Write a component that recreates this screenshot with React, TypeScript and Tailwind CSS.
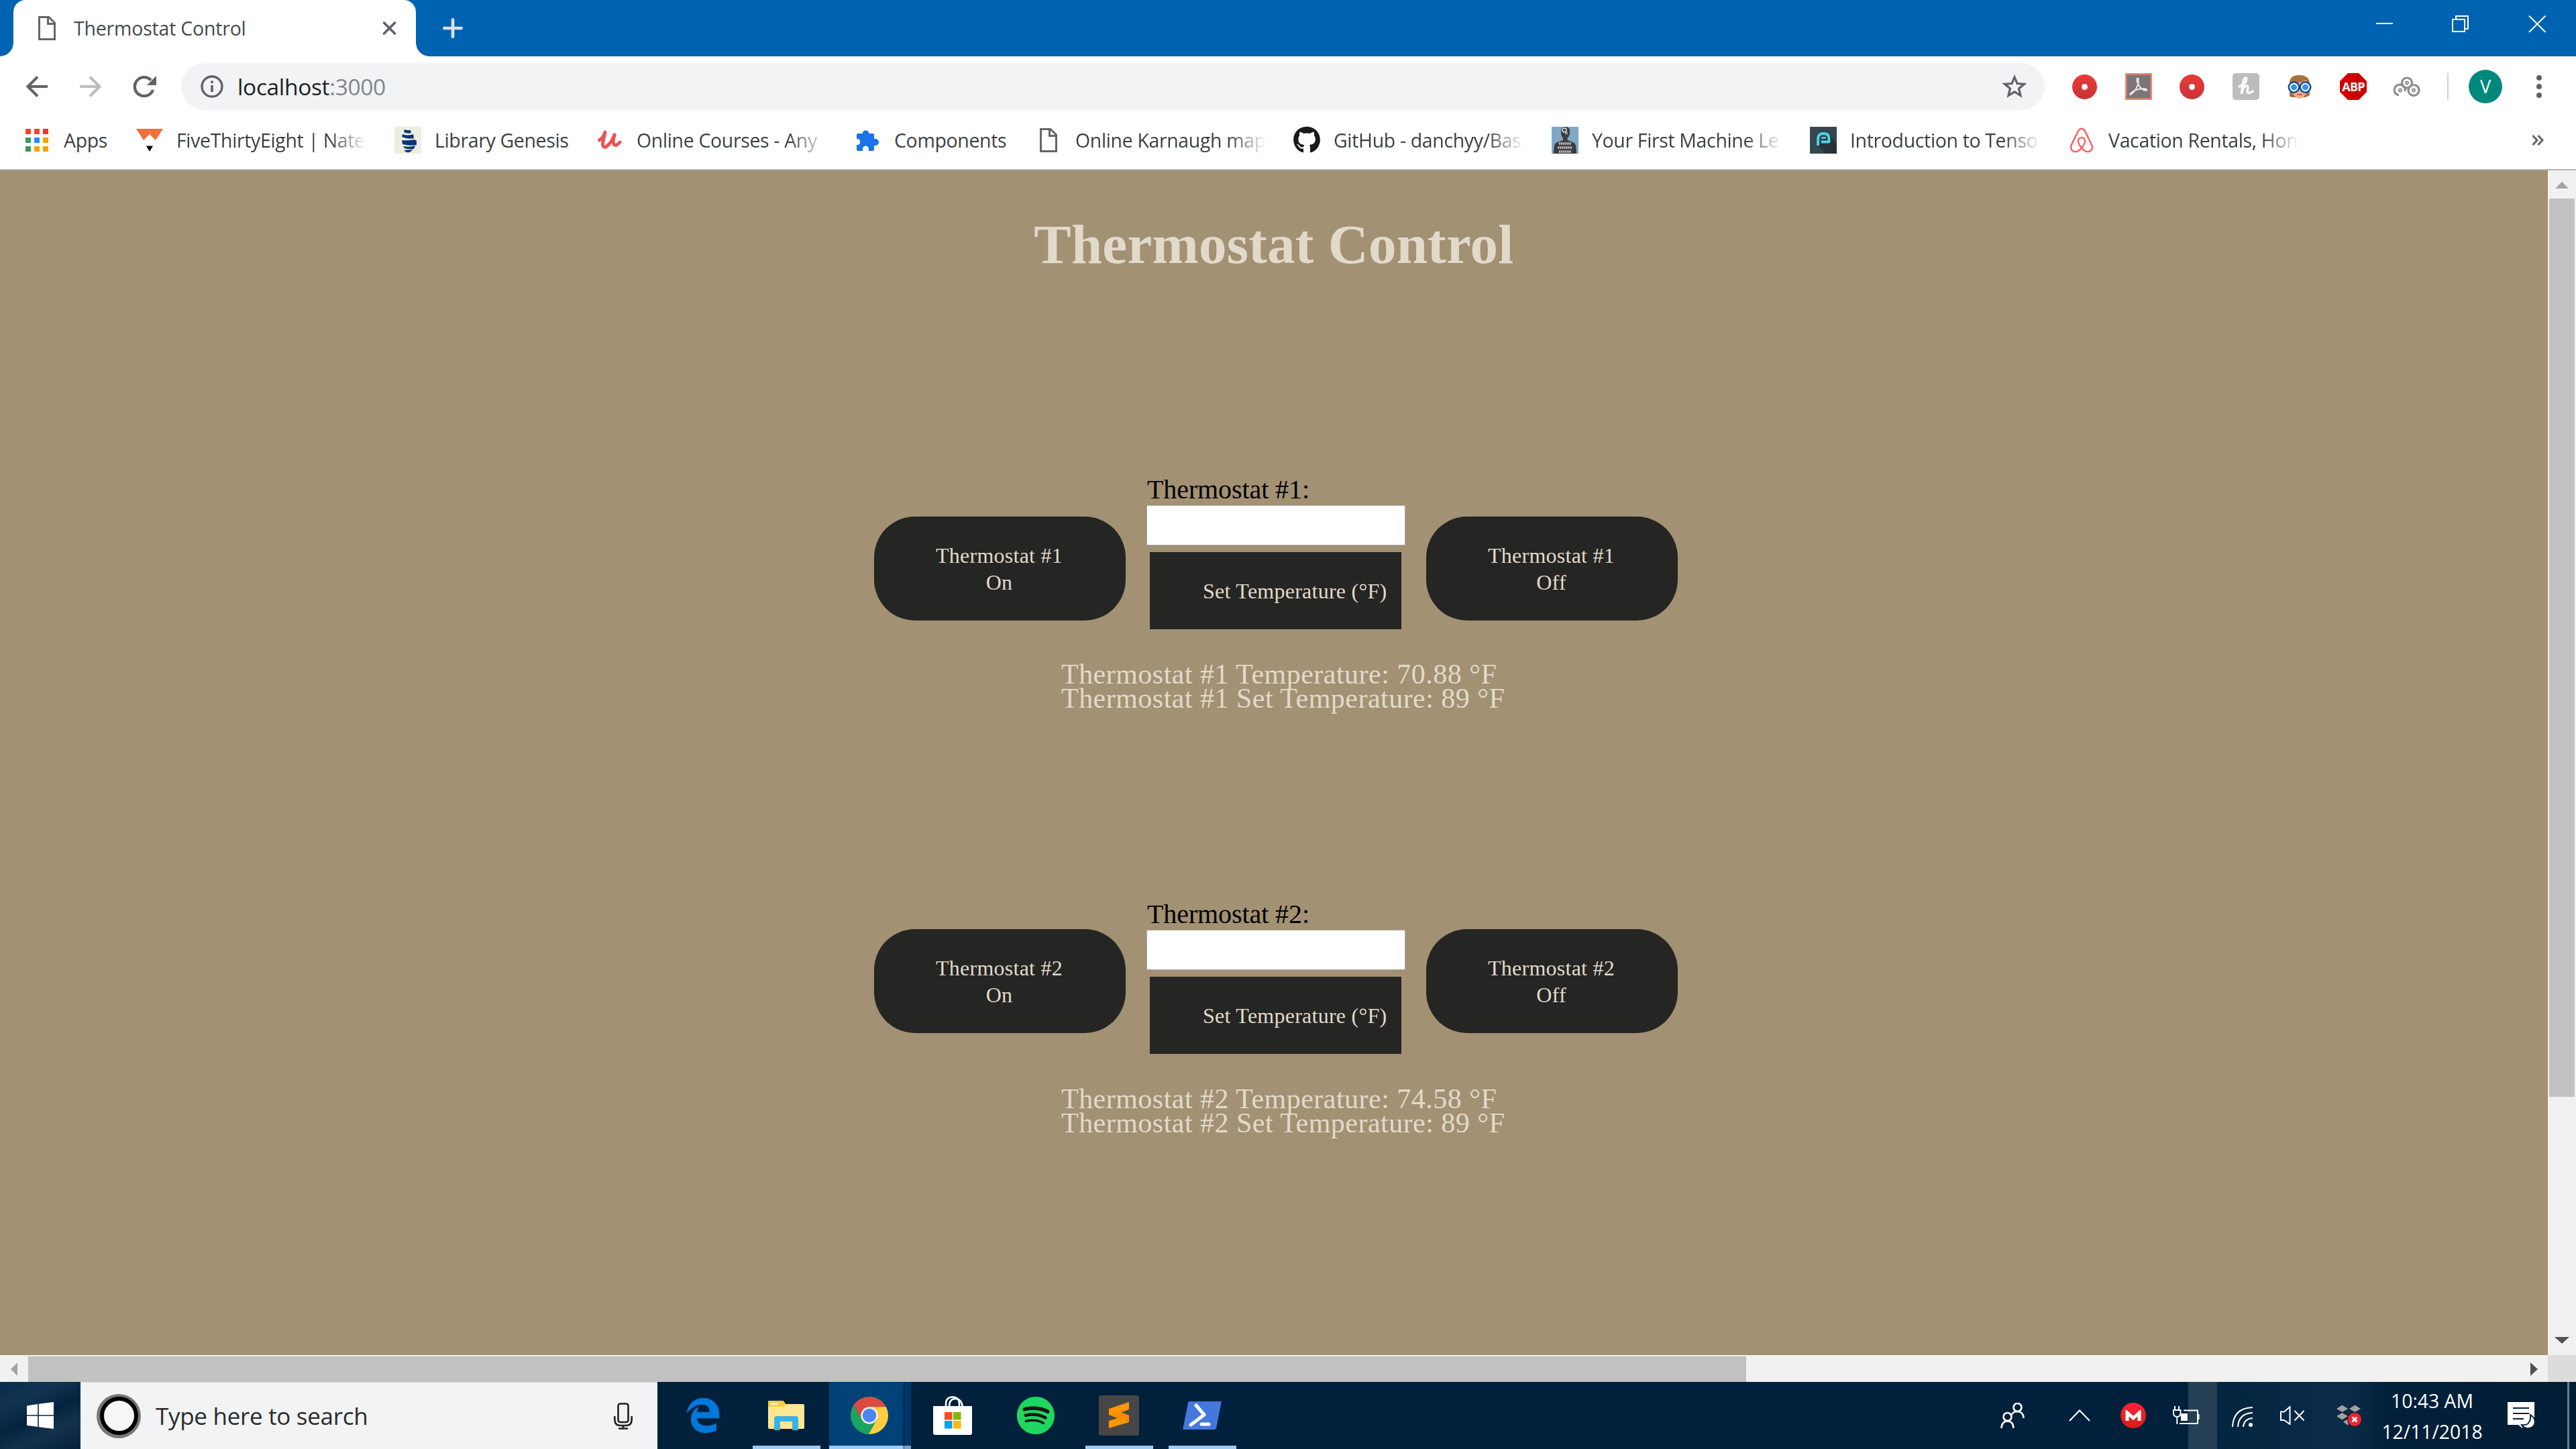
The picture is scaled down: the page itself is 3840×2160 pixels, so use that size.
import type { ReactNode } from 'react';
import { FaAirbnb, FaEdgeLegacy, FaGithub, FaSpotify } from 'react-icons/fa';

/* ---------- Browser icons ---------- */

function PageIcon() {
  return (
    <svg width="26" height="36" viewBox="0 0 26 36" fill="none" stroke="#666" strokeWidth="3" className="shrink-0">
      <path d="M1.5 1.5H16L24.5 10V34.5H1.5Z" />
      <path d="M14.5 2V11.5H24" />
    </svg>
  );
}

function TabCloseIcon() {
  return (
    <svg width="21" height="20" viewBox="0 0 21 20" stroke="#5f6368" strokeWidth="3.6" strokeLinecap="round">
      <path d="M2.500 2L18.500 18M18.500 2L2.500 18" />
    </svg>
  );
}

function PlusIcon() {
  return (
    <svg width="30" height="30" viewBox="0 0 30 30" stroke="#dbe3ea" strokeWidth="4.600" strokeLinecap="round">
      <path d="M15 2.300V27.700M2.300 15H27.700" />
    </svg>
  );
}

function ArrowIcon({ color, flip = false }: { color: string; flip?: boolean }) {
  return (
    <svg width="34" height="32" viewBox="0 0 34 32" fill="none" stroke={color} strokeWidth="4" className={flip ? 'rotate-180' : ''}>
      <path d="M33 16H4M18 1.500L3.500 16L18 30.500" />
    </svg>
  );
}

function ReloadIcon() {
  return (
    <svg width="36" height="34" viewBox="0 0 36 34">
      <path d="M30 22A14 14 0 1 1 27 7.500" fill="none" stroke="#5f6368" strokeWidth="4.200" />
      <path d="M35 1V15H21Z" fill="#5f6368" />
    </svg>
  );
}

function InfoIcon() {
  return (
    <svg width="36" height="36" viewBox="0 0 36 36">
      <circle cx="18" cy="18" r="15" fill="none" stroke="#5f6368" strokeWidth="3.400" />
      <path d="M18 16V26M18 9.500V13" stroke="#5f6368" strokeWidth="3.600" />
    </svg>
  );
}

function StarIcon() {
  return (
    <svg width="36" height="36" viewBox="0 0 36 36" fill="none" stroke="#5f6368" strokeWidth="3.200">
      <path d="M18 4L22 13.500L32.500 14.300L24.500 21L27 31.500L18 26L9 31.500L11.500 21L3.500 14.300L14 13.500Z" />
    </svg>
  );
}

/* ---------- Bookmark icons ---------- */

function AppsIcon() {
  const colors = ['#ff3b30', '#ff3b30', '#f5342b', '#2fa05a', '#1e8cff', '#f4a300', '#2fa05a', '#f4a300', '#f4a300'];
  return (
    <div className="grid grid-cols-3 gap-[5px]">
      {colors.map((color, i) => (
        <span key={i} className="size-[8px]" style={{ backgroundColor: color }} />
      ))}
    </div>
  );
}

function FiveThirtyEightIcon() {
  return (
    <svg width="40" height="36" viewBox="0 0 40 36">
      <path d="M0 1H40L29 18L20 9L11 18Z" fill="#ed713a" />
      <path d="M15 26.500H25L20 35Z" fill="#000" />
    </svg>
  );
}

function LibraryGenesisIcon() {
  return (
    <svg width="40" height="40" viewBox="0 0 40 40">
      <rect width="40" height="40" fill="#edeee0" />
      <path
        d="M15 4Q20 6 24 5L25 9Q20 11 14 8ZM12 11Q20 14 28 11L29 17Q20 19 11 15ZM11 20Q20 21 30 19L33 21V27Q22 29 12 26ZM13 29Q22 31 31 28L29 33Q20 34 15 32ZM14 35L27 34Q24 39 18 38Z"
        fill="#07357c"
      />
    </svg>
  );
}

function UdemyIcon() {
  return (
    <svg width="36" height="30" viewBox="0 0 36 30" fill="none" stroke="#ec5252" strokeLinecap="round" strokeLinejoin="round">
      <path d="M2.500 15Q8 12 11 3Q8 16 7.500 21Q8 27 13 24.500Q21 18 25 7" strokeWidth="5" />
      <path d="M25 7Q22 17 24 21Q27 25 33 18" strokeWidth="4.800" />
    </svg>
  );
}

function PuzzleIcon() {
  return (
    <svg width="34" height="34" viewBox="0 0 34 34" fill="#1a73e8">
      <path d="M10 7V5A5 5 0 0 1 19 5V7H25Q27 7 27 9V15H29A4.700 4.700 0 0 1 29 25H27V31Q27 33 25 33H19V30A4.500 4.500 0 0 0 10 30V33H3Q1 33 1 31V24H3A4.700 4.700 0 0 0 3 15H1V9Q1 7 3 7Z" />
    </svg>
  );
}

function MachineLearningIcon() {
  return (
    <svg width="40" height="40" viewBox="0 0 40 40">
      <rect width="40" height="40" fill="#80a7c8" />
      <path d="M14 8Q13 0 20 0Q28 0 27 8Q27 14 23.500 17V20L34 24Q37 28 37 40H3Q3 28 6 24L17 20V17Q14 14 14 8Z" fill="#3d3d3d" />
      <circle cx="19" cy="5" r="3" fill="none" stroke="#e4e4e4" strokeWidth="1.500" />
      <circle cx="22" cy="9.500" r="1.500" fill="none" stroke="#e4e4e4" strokeWidth="1" />
      <path d="M11 25H29M9 31H31M11 37H29" stroke="#c4c4c4" strokeWidth="3.600" strokeDasharray="2.200 0.900" />
    </svg>
  );
}

function TensorIcon() {
  return (
    <svg width="40" height="40" viewBox="0 0 40 40">
      <rect width="40" height="40" fill="#36464f" />
      <path d="M28 12L40 24V40H24L12 28Z" fill="#28333a" />
      <path d="M12 28V18Q12 10 20 10Q28.500 10 28.500 17.500V22.500H17" fill="none" stroke="#4dd6e8" strokeWidth="3.800" strokeLinejoin="round" />
      <path d="M17 16.500H24" stroke="#4dd6e8" strokeWidth="2.500" />
    </svg>
  );
}

/* ---------- Extension icons ---------- */

function RecordIcon() {
  return (
    <span className="flex size-[37px] items-center justify-center rounded-full bg-linear-to-b from-[#ea3a33] to-[#c83338]">
      <span className="size-[9px] rounded-full bg-white" />
    </span>
  );
}

function AcrobatIcon() {
  return (
    <svg width="40" height="40" viewBox="0 0 40 40">
      <rect x="1.200" y="1.200" width="37.600" height="37.600" fill="#7d7577" stroke="#f58273" strokeWidth="2.400" />
      <path
        d="M7 32Q14 30 19 17Q21 8 18.500 7.500Q16 8 19 16Q24 26 32 26Q33 23 26 23Q14 24 8 30Q6 33 9 32"
        fill="none"
        stroke="#e9e6e6"
        strokeWidth="2"
      />
    </svg>
  );
}

function HoneyIcon() {
  return (
    <svg width="40" height="40" viewBox="0 0 40 40">
      <rect width="40" height="40" rx="5" fill="#bdbdbd" />
      <path
        d="M10 20Q20 16 21 9Q20 4 16.500 10Q14 20 13.500 31Q16 19 21 18.500Q24 20 22 27Q22 32 30 27"
        fill="none"
        stroke="#fff"
        strokeWidth="3.400"
        strokeLinecap="round"
      />
    </svg>
  );
}

function GogglesIcon() {
  return (
    <svg width="38" height="38" viewBox="0 0 38 38">
      <path d="M4 34V13Q5 2 18 2Q33 2 34 14V32L28 35H9Z" fill="#a8703c" />
      <path d="M9 14Q20 14 29 9V29Q24 37 19 37Q13 37 9 29Z" fill="#f0b184" />
      <path d="M15 31H23" stroke="#c75a4a" strokeWidth="2" />
      <circle cx="10.500" cy="20" r="7.500" fill="#3f8ee8" stroke="#0c4da2" strokeWidth="3" />
      <circle cx="27.500" cy="20" r="7.500" fill="#3f8ee8" stroke="#0c4da2" strokeWidth="3" />
      <circle cx="10.500" cy="20" r="5.500" fill="none" stroke="#fff" strokeWidth="1.800" />
      <circle cx="27.500" cy="20" r="5.500" fill="none" stroke="#fff" strokeWidth="1.800" />
    </svg>
  );
}

function AdblockIcon() {
  return (
    <div className="flex size-[40px] items-center justify-center bg-[#cc0000] text-[18px] font-bold tracking-[-0.8px] text-white [clip-path:polygon(30%_0,70%_0,100%_30%,100%_70%,70%_100%,30%_100%,0_70%,0_30%)]">
      ABP
    </div>
  );
}

function CloverIcon() {
  return (
    <svg width="40" height="30" viewBox="0 0 40 30" fill="none" stroke="#8c8c8c" strokeWidth="3.200">
      <circle cx="20" cy="9.500" r="7.500" />
      <path d="M8 28A8 8 0 1 1 17 22" />
      <circle cx="30" cy="20.500" r="8" />
      <circle cx="20" cy="9.500" r="2" strokeWidth="2" />
      <circle cx="10" cy="20.500" r="2" strokeWidth="2" />
      <circle cx="30" cy="20.500" r="2" strokeWidth="2" />
    </svg>
  );
}

/* ---------- Taskbar icons ---------- */

function WindowsIcon() {
  return (
    <svg width="40" height="40" viewBox="0 0 40 40" fill="#fff">
      <path d="M0 5.500L16.200 3V19.200H0ZM17.800 2.800L40 0V19.200H17.800ZM0 20.800H16.200V37L0 34.800ZM17.800 20.800H40V40L17.800 37.200Z" />
    </svg>
  );
}

function MicIcon() {
  return (
    <svg width="28" height="40" viewBox="0 0 28 40" fill="none" stroke="#1f1f1f" strokeWidth="2.600">
      <rect x="6.500" y="1.500" width="15" height="27.500" rx="3" />
      <path d="M1.300 20V25Q1.300 34 10 34H18Q26.700 34 26.700 25V20M14 34V38.500M7 38.500H21" />
    </svg>
  );
}

function FolderIcon() {
  return (
    <svg width="54" height="46" viewBox="0 0 54 46">
      <path d="M0 3Q0 1 2 1H21Q23 1 24 3L26 6H52Q54 6 54 8V41Q54 43 52 43H2Q0 43 0 41Z" fill="#ffe694" />
      <path d="M0 3Q0 1 2 1H21Q23 1 24 3L26 6L23 10H0Z" fill="#ffcd3a" />
      <rect x="4" y="4.500" width="11" height="2.600" fill="#fff" />
      <path d="M9 45V28Q9 24 13 24H41Q45 24 45 28V45H36V32H18V45Z" fill="#38b3e6" />
    </svg>
  );
}

function ChromeIcon() {
  return (
    <svg width="56" height="56" viewBox="-22 -22 44 44">
      <path d="M-18.460 -11.970A22 22 0 0 1 19.600 -10L0 -10L0 0L-8.660 5Z" fill="#db4b3e" />
      <path d="M19.600 -10A22 22 0 0 1 -1.140 21.970L8.660 5L0 0L0 -10Z" fill="#ffcd42" />
      <path d="M-1.140 21.970A22 22 0 0 1 -18.460 -11.970L-8.660 5L0 0L8.660 5Z" fill="#1ba362" />
      <circle r="10" fill="#f1f1f1" />
      <circle r="8" fill="#4b87f3" />
    </svg>
  );
}

function StoreIcon() {
  return (
    <svg width="58" height="58" viewBox="0 0 58 58">
      <path d="M19 16V12Q19 1.500 29 1.500Q39 1.500 39 12V16M24 16Q24 4 33 4Q42 4 44 16" fill="none" stroke="#fff" strokeWidth="2.600" />
      <path d="M0 15H58V55Q58 58 55 58H3Q0 58 0 55Z" fill="#fff" />
      <rect x="17" y="24" width="11.500" height="11.500" fill="#f25022" />
      <rect x="30" y="24" width="11.500" height="11.500" fill="#7fba00" />
      <rect x="17" y="37" width="11.500" height="11.500" fill="#00a4ef" />
      <rect x="30" y="37" width="11.500" height="11.500" fill="#ffb900" />
    </svg>
  );
}

function SublimeIcon() {
  return (
    <svg width="60" height="60" viewBox="0 0 60 60">
      <rect width="60" height="60" rx="4" fill="#474747" />
      <path d="M15 20L45 10V21L33 25.500L45 30V40L15 49V38L28 34L15 29Z" fill="#ff9800" />
      <path d="M15 29L28 34L45 40V30L33 25.500Z" fill="#f98b00" />
    </svg>
  );
}

function PowerShellIcon() {
  return (
    <svg width="58" height="42" viewBox="0 0 58 42">
      <path d="M11 0H56Q58 0 57.500 2L50 40Q49.500 42 47 42H2Q0 42 0.500 40L8 2Q8.500 0 11 0Z" fill="#4478dc" />
      <path d="M20 6L32 20L12 35" fill="none" stroke="#fff" strokeWidth="5" strokeLinecap="round" strokeLinejoin="round" />
      <path d="M28 34H39" stroke="#fff" strokeWidth="5" strokeLinecap="round" />
    </svg>
  );
}

function PeopleIcon() {
  return (
    <svg width="36" height="38" viewBox="0 0 36 38" fill="none" stroke="#fff" strokeWidth="2.600">
      <circle cx="25.500" cy="7" r="6" />
      <circle cx="10.500" cy="21" r="6" />
      <path d="M1.500 38Q2 27.500 10.500 27.500Q19 27.500 19.500 38M16.500 18Q19 13 25.500 13Q34.500 14 34.500 23" />
    </svg>
  );
}

function BatteryIcon() {
  return (
    <svg width="41" height="28" viewBox="0 0 41 28" fill="none" stroke="#fff" strokeWidth="2">
      <path d="M16 6.500H37V26H10M38.500 12V20" />
      <rect x="12" y="11" width="10" height="11" fill="#fff" stroke="none" />
      <path d="M3 0V5M9 0V5M1 6H11.500V11Q11 16 6.300 16Q1.500 16 1 11ZM6.300 16V27" />
    </svg>
  );
}

function WifiIcon() {
  return (
    <svg width="32" height="32" viewBox="0 0 32 32" fill="none" stroke="#fff" strokeWidth="2">
      <path d="M1 31Q2 3 31 2M9 31Q10 11 31 10M17 31Q18 19 31 18" />
      <circle cx="28" cy="28" r="3" fill="#fff" stroke="none" />
    </svg>
  );
}

function MutedIcon() {
  return (
    <svg width="37" height="28" viewBox="0 0 37 28" fill="none" stroke="#fff" strokeWidth="2">
      <path d="M1 8.500H6L14.500 1V27L6 21H1ZM21.500 7L35.500 21.500M35.500 7L21.500 21.500" />
    </svg>
  );
}

function DropboxIcon() {
  return (
    <svg width="40" height="34" viewBox="0 0 40 34">
      <path d="M1 7L10.500 1L20 7L10.500 12.500ZM20 7L29.500 1L39 7L29.500 12.500ZM1 18L10.500 12.500L20 18L10.500 24ZM11 26.500L20 21V33Z" fill="#9aa0a6" stroke="#101c28" />
      <circle cx="29" cy="23" r="10.500" fill="#e8252f" stroke="#101c28" />
      <path d="M25.500 19.500L32.500 26.500M32.500 19.500L25.500 26.500" stroke="#fff" strokeWidth="2.600" />
    </svg>
  );
}

function NotificationIcon() {
  return (
    <svg width="42" height="40" viewBox="0 0 42 40">
      <path d="M0 0H40V34H23L22 39L16 34H0Z" fill="#fff" />
      <path d="M8 9H32M8 17H32M8 25H24" stroke="#02203a" strokeWidth="2" />
      <path d="M34 19Q42 24 40 31Q37 39 29 39Q23 38 21 34Q30 35 32 30Q35 26 34 19Z" fill="#fff" stroke="#02203a" strokeWidth="2" />
      <path d="M36 24Q40 28 38 33Q35 38 28 37" fill="none" stroke="#fff" strokeWidth="2" />
    </svg>
  );
}

/* ---------- Browser chrome ---------- */

function TabStrip() {
  return (
    <div className="flex h-[84px] items-stretch bg-[#0063b1] pl-[20px]">
      <div className="relative flex w-[600px] items-center rounded-t-[18px] bg-white pr-[29px] pl-[37px]">
        <span className="absolute bottom-0 left-[-20px] size-[20px] bg-[radial-gradient(circle_at_0_0,#0063b1_19.5px,#fff_20px)]" />
        <span className="absolute right-[-20px] bottom-0 size-[20px] bg-[radial-gradient(circle_at_100%_0,#0063b1_19.5px,#fff_20px)]" />
        <PageIcon />
        <span className="ml-[27px] flex-1 text-[28.5px] leading-[84px] tracking-[-0.2px] text-[#45494d]">Thermostat Control</span>
        <TabCloseIcon />
      </div>
      <div className="ml-[40px] flex items-center">
        <PlusIcon />
      </div>
      <div className="mr-[45px] ml-auto flex items-start pt-[23px]">
        <svg width="253" height="26" viewBox="0 0 253 26" fill="none" stroke="#fff" strokeWidth="2">
          <path d="M0 12H25M119 6V1H137V20H132" />
          <rect x="114" y="6" width="18" height="18" />
          <path d="M228 0.500L252.500 25M252.500 0.500L228 25" />
        </svg>
      </div>
    </div>
  );
}

function Toolbar() {
  return (
    <div className="flex h-[90px] items-center bg-white pl-[38px]">
      <ArrowIcon color="#5f6368" />
      <div className="ml-[46px]">
        <ArrowIcon color="#babcbe" flip />
      </div>
      <div className="ml-[46px]">
        <ReloadIcon />
      </div>
      <div className="ml-[36px] flex h-[70px] w-[2778px] items-center rounded-full bg-[#f1f3f4] pr-[27px] pl-[28px]">
        <InfoIcon />
        <span className="ml-[20px] flex-1 text-[33.5px] leading-[70px] tracking-[-0.35px] text-[#202124]">
          localhost<span className="text-[#80868b]">:3000</span>
        </span>
        <StarIcon />
      </div>
      <div className="ml-[41px] flex items-center">
        <RecordIcon />
        <div className="ml-[42px]"><AcrobatIcon /></div>
        <div className="ml-[41px]"><RecordIcon /></div>
        <div className="ml-[42px]"><HoneyIcon /></div>
        <div className="ml-[41px]"><GogglesIcon /></div>
        <div className="ml-[41px]"><AdblockIcon /></div>
        <div className="ml-[40px]"><CloverIcon /></div>
        <div className="ml-[40px] h-[40px] w-[2px] bg-[#cfd1d4]" />
        <div className="ml-[30px] flex size-[50px] items-center justify-center rounded-full bg-[#00897b] text-[27px] text-white">V</div>
        <div className="ml-[51px] flex flex-col gap-[5px]">
          <span className="size-[8px] rounded-full bg-[#5f6368]" />
          <span className="size-[8px] rounded-full bg-[#5f6368]" />
          <span className="size-[8px] rounded-full bg-[#5f6368]" />
        </div>
      </div>
    </div>
  );
}

function Bookmark({ icon, label, width, fade = false }: { icon: ReactNode; label: string; width: number; fade?: boolean }) {
  return (
    <div className="flex shrink-0 items-center pr-[40px]" style={{ width }}>
      <span className="mr-[20px] flex w-[40px] shrink-0 justify-center">{icon}</span>
      <span
        className={
          'flex-1 overflow-hidden text-[28.5px] leading-[50px] tracking-[-0.36px] whitespace-nowrap' +
          (fade ? ' [mask-image:linear-gradient(to_right,#000_80%,transparent)]' : '')
        }
      >
        {label}
      </span>
    </div>
  );
}

function BookmarksBar() {
  return (
    <div className="flex h-[80px] items-center border-b-2 border-[#b6b4b0] bg-white pb-[9px] pl-[35px] text-[#3c4043]">
      <Bookmark icon={<AppsIcon />} label="Apps" width={168} />
      <Bookmark icon={<FiveThirtyEightIcon />} label="FiveThirtyEight | Nate" width={385} fade />
      <Bookmark icon={<LibraryGenesisIcon />} label="Library Genesis" width={301} />
      <Bookmark icon={<UdemyIcon />} label="Online Courses - Any" width={384} fade />
      <Bookmark icon={<PuzzleIcon />} label="Components" width={270} />
      <Bookmark icon={<PageIcon />} label="Online Karnaugh map" width={385} fade />
      <Bookmark icon={<FaGithub className="size-[41px] text-[#191717]" />} label="GitHub - danchyy/Bas" width={385} fade />
      <Bookmark icon={<MachineLearningIcon />} label="Your First Machine Le" width={385} fade />
      <Bookmark icon={<TensorIcon />} label="Introduction to Tenso" width={385} fade />
      <Bookmark icon={<FaAirbnb className="size-[42px] text-[#ff5a5f]" />} label="Vacation Rentals, Hon" width={385} fade />
      <svg width="18" height="16" viewBox="0 0 18 16" fill="none" stroke="#5f6368" strokeWidth="3" className="mr-[48px] ml-auto">
        <path d="M1.500 1L8 8L1.500 15M9.500 1L16 8L9.500 15" />
      </svg>
    </div>
  );
}

/* ---------- Page ---------- */

function SwitchButton({ id, state, offset }: { id: number; state: string; offset: string }) {
  return (
    <button
      className={
        'flex h-[155px] w-[375px] flex-col items-center justify-center rounded-[61px] bg-[#252523] pr-[2px] text-[32px] leading-[40px] tracking-[0.25px] text-[#e1dacb] ' +
        offset
      }
    >
      <span>Thermostat #{id}</span>
      <span>{state}</span>
    </button>
  );
}

function Thermostat({ id, current, target, offset }: { id: number; current: string; target: string; offset: string }) {
  return (
    <section>
      <div className="flex items-start gap-[31px] pl-[1303px]">
        <SwitchButton id={id} state="On" offset={offset} />
        <form className="flex w-[386px] flex-col">
          <label className="h-[46px] pl-px text-[40px] leading-[46px] tracking-[-0.1px] text-black">Thermostat #{id}:</label>
          <input className="h-[60px] border border-[#a9a9a9] bg-white outline-none" />
          <button type="button" className="mt-[10px] ml-[5px] h-[115px] w-[375px] bg-[#252523] pl-[79px] text-left text-[32px] tracking-[0.25px] whitespace-nowrap text-[#e1dacb]">
            Set Temperature (°F)
          </button>
        </form>
        <SwitchButton id={id} state="Off" offset={offset} />
      </div>
      <div className="mt-[49px] pl-[1582px] text-[42px] leading-[36px] tracking-[0.48px] text-[#e1dacb]">
        <p>Thermostat #{id} Temperature: {current} °F</p>
        <p>Thermostat #{id} Set Temperature: {target} °F</p>
      </div>
    </section>
  );
}

function VerticalScrollbar() {
  return (
    <div className="flex w-[42px] flex-col items-center bg-[#f1f1f1]">
      <svg width="20" height="10" viewBox="0 0 20 10" className="mt-[17px]">
        <path d="M0 10L10 0L20 10Z" fill="#a3a3a3" />
      </svg>
      <div className="mt-[15px] h-[1339px] w-[38px] bg-[#c1c1c1]" />
      <svg width="22" height="10" viewBox="0 0 22 10" className="mt-auto mb-[17px]">
        <path d="M0 0L11 10L22 0Z" fill="#505050" />
      </svg>
    </div>
  );
}

function HorizontalScrollbar() {
  return (
    <div className="flex h-[40px] items-center bg-[#f1f1f1]">
      <svg width="10" height="20" viewBox="0 0 10 20" className="mt-[2px] ml-[16px]">
        <path d="M10 0L0 10L10 20Z" fill="#a3a3a3" />
      </svg>
      <div className="mt-[2px] ml-[16px] h-[38px] w-[2561px] bg-[#c1c1c1]" />
      <svg width="11" height="20" viewBox="0 0 11 20" className="mt-[2px] mr-[15px] ml-auto">
        <path d="M0 0L11 10L0 20Z" fill="#505050" />
      </svg>
      <div className="h-full w-[42px] bg-[#dcdcdc]" />
    </div>
  );
}

/* ---------- Taskbar ---------- */

function TaskButton({ children, running = false }: { children: ReactNode; running?: boolean }) {
  return (
    <div className="flex h-full w-[124px] flex-col items-center">
      <div className="flex flex-1 items-center pt-[5px]">{children}</div>
      <div className={running ? 'h-[5px] w-[101px] bg-[#9dcbf3]' : 'h-[5px]'} />
    </div>
  );
}

function ActiveTaskButton({ children }: { children: ReactNode }) {
  return (
    <div className="flex h-full w-[124px] pl-[2px]">
      <div className="flex w-[110px] flex-col items-center bg-[#004177]">
        <div className="flex flex-1 items-center pt-[5px] pl-[10px]">{children}</div>
        <div className="h-[5px] w-full bg-[#9dcbf3]" />
      </div>
      <div className="flex w-[3px] flex-col justify-end bg-[#002c54]">
        <div className="h-[5px] bg-[#6d8ba6]" />
      </div>
      <div className="flex flex-1 flex-col justify-end bg-[#00366a]">
        <div className="h-[5px] bg-[#7f9fbe]" />
      </div>
    </div>
  );
}

function Taskbar() {
  return (
    <footer className="flex h-[100px] items-center bg-[linear-gradient(to_right,#00203c_3262px,#253f55_3262px,#253f55_3305px,#04253f_3305px,#0a2c49_3500px,#02203a_3560px,#011d34_3840px)]">
      <div className="flex h-full w-[120px] items-center justify-center bg-[linear-gradient(155deg,#0a2c4c,#123453_25%,#04233f_50%,#12314c_70%,#06223c)]">
        <WindowsIcon />
      </div>
      <div className="flex h-full w-[860px] items-center border-t border-[#d5dbe0] bg-[#f1f3f4] pr-[37px] pl-[24px]">
        <span className="flex size-[66px] items-center justify-center rounded-full bg-[#777]">
          <span className="size-[57px] rounded-full border-[6px] border-black bg-[#f4f6f7]" />
        </span>
        <span className="ml-[22px] flex-1 pt-[2px] text-[35px] tracking-[-0.3px] text-[#2b2b2b]">Type here to search</span>
        <MicIcon />
      </div>
      <nav className="ml-[6px] flex h-full">
        <TaskButton><FaEdgeLegacy className="size-[54px] text-[#0078d7]" /></TaskButton>
        <TaskButton running><FolderIcon /></TaskButton>
        <ActiveTaskButton><ChromeIcon /></ActiveTaskButton>
        <TaskButton><StoreIcon /></TaskButton>
        <TaskButton>
          <span className="flex size-[56px] items-center justify-center rounded-full bg-[#191414]">
            <FaSpotify className="size-[58px] shrink-0 text-[#1ed760]" />
          </span>
        </TaskButton>
        <TaskButton running><SublimeIcon /></TaskButton>
        <TaskButton running><PowerShellIcon /></TaskButton>
      </nav>
      <div className="ml-auto flex h-full items-center">
        <PeopleIcon />
        <svg width="32" height="18" viewBox="0 0 32 18" fill="none" stroke="#fff" strokeWidth="2.200" className="ml-[66px]">
          <path d="M1 17L16 1.500L31 17" />
        </svg>
        <div className="ml-[45px] flex size-[38px] items-center justify-center rounded-full bg-linear-to-b from-[#fb2536] to-[#dc1c10]">
          <svg width="24" height="16" viewBox="0 0 24 16" fill="none" stroke="#fff" strokeWidth="5">
            <path d="M3 16V4L12 12L21 4V16" />
          </svg>
        </div>
        <div className="ml-[40px]"><BatteryIcon /></div>
        <div className="ml-[47px] pt-[4px]"><WifiIcon /></div>
        <div className="ml-[40px]"><MutedIcon /></div>
        <div className="ml-[45px]"><DropboxIcon /></div>
        <div className="ml-[29px] w-[151px] pt-[2px] text-center text-[28.3px] leading-[46px] whitespace-nowrap text-white">
          <div>10:43 AM</div>
          <div>12/11/2018</div>
        </div>
        <div className="ml-[37px]"><NotificationIcon /></div>
        <div className="mr-[10px] ml-[47px] h-full w-[3px] bg-[#6b7c8a]" />
      </div>
    </footer>
  );
}

export default function App() {
  return (
    <div className="flex h-[2160px] w-[3840px] flex-col overflow-hidden font-['Open_Sans',sans-serif]">
      <TabStrip />
      <Toolbar />
      <BookmarksBar />
      <div className="flex h-[1766px]">
        <main className="flex w-[3798px] flex-col bg-[#a39173] pt-[60px] font-['Liberation_Serif',serif]">
          <h1 className="h-[100px] text-center text-[83px] leading-[100px] font-bold tracking-[0.25px] text-[#e1dacb]">Thermostat Control</h1>
          <div className="mt-[293px] flex flex-col gap-[281px]">
            <Thermostat id={1} current="70.88" target="89" offset="mt-[63px]" />
            <Thermostat id={2} current="74.58" target="89" offset="mt-[45px]" />
          </div>
        </main>
        <VerticalScrollbar />
      </div>
      <HorizontalScrollbar />
      <Taskbar />
    </div>
  );
}
